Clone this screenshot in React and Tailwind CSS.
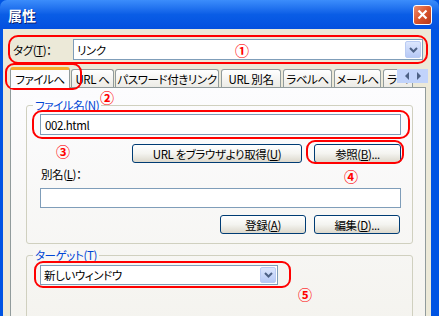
import React from "react";

const Chevron = () => (
  <svg width="9" height="6" viewBox="0 0 9 6">
    <path d="M1 1 L4.5 4.5 L8 1" fill="none" stroke="#4d6185" strokeWidth="2" />
  </svg>
);

function DropButton() {
  return (
    <div className="w-[16px] h-full flex items-center justify-center bg-gradient-to-b from-[#dce6fd] to-[#b6c9f6] border border-[#b9cbf3] rounded-[2px]">
      <Chevron />
    </div>
  );
}

function XpButton({ children, w }) {
  return (
    <div
      className={`${w} h-[19px] flex items-center justify-center rounded-[3px] border border-[#003c74] bg-gradient-to-b from-[#ffffff] via-[#f4f4f0] to-[#dcd8cc] text-black whitespace-nowrap`}
    >
      {children}
    </div>
  );
}

function Tab({ w, children, ml = "" }) {
  return (
    <div
      className={`${w} ${ml} h-[18px] mt-[2px] flex items-center justify-center rounded-t-[3px] border border-b-0 border-[#919b9c] bg-gradient-to-b from-white to-[#ecebe6] whitespace-nowrap overflow-hidden`}
    >
      {children}
    </div>
  );
}

function Mark({ className }) {
  return <div className={`absolute border-2 border-[#ff0000] ${className}`} />;
}

function Num({ className, children }) {
  return (
    <div className={`absolute text-[#ff0000] text-[14px] font-bold leading-none tracking-normal ${className}`}>
      {children}
    </div>
  );
}

export default function App() {
  const u = (c) => <span className="underline">{c}</span>;
  return (
    <div className="relative w-[439px] h-[316px] overflow-hidden bg-[#0054e3] font-['Noto_Sans_CJK_JP',sans-serif] text-[11.5px] leading-[14px] tracking-[-0.4px] text-black [font-feature-settings:'palt']">
      {/* title bar */}
      <div className="h-[29px] flex items-center justify-between pl-[8px] pr-[7px] rounded-t-[7px] bg-gradient-to-b from-[#3c8dfb] via-[#0a5de6] to-[#0450df]">
        <span className="text-white font-bold text-[14px] tracking-normal [text-shadow:1px_1px_0_#0a1e6e]">属性</span>
        <div className="w-[19px] h-[20px] rounded-[3px] border border-white bg-gradient-to-br from-[#ec8c6c] via-[#d9532b] to-[#b7381a] flex items-center justify-center">
          <svg width="11" height="11" viewBox="0 0 11 11">
            <path d="M1.5 1.5 L9.5 9.5 M9.5 1.5 L1.5 9.5" stroke="white" strokeWidth="2.2" />
          </svg>
        </div>
      </div>

      <div className="flex h-[287px]">
        <div className="w-[3px] bg-[#0054e3]" />
        <div className="w-[428px] bg-[#ece9d8] flex flex-col pl-[7px] pr-[5px]">
          {/* tag row */}
          <div className="mt-[10px] h-[21px] flex items-center">
            <div className="w-[63px] pl-[3px] whitespace-nowrap">タグ({u("T")})：</div>
            <div className="w-[350px] h-[21px] bg-white border border-[#7f9db9] flex items-center pl-[3px] pr-[1px] py-[1px]">
              <span className="flex-1">リンク</span>
              <DropButton />
            </div>
          </div>

          {/* tabs */}
          <div className="relative mt-[7px] h-[20px] flex items-end">
            <div className="relative z-10 w-[60px] h-[21px] mb-[-1px] flex items-center justify-center rounded-t-[3px] border border-b-0 border-[#919b9c] bg-[#fcfcfe] border-t-[3px] border-t-[#f6a92e] whitespace-nowrap">
              ファイルへ
            </div>
            <Tab w="w-[43px]" ml="ml-[1px]">URL へ</Tab>
            <Tab w="w-[104px]" ml="ml-[1px]">パスワード付きリンク</Tab>
            <Tab w="w-[60px]" ml="ml-[2px]">URL 別名</Tab>
            <Tab w="w-[49px]" ml="ml-[2px]">ラベルへ</Tab>
            <Tab w="w-[47px]" ml="ml-[2px]">メールへ</Tab>
            <Tab w="w-[30px]" ml="ml-[2px]">
              <span className="w-full pl-[3px]">ラベ</span>
            </Tab>
            <div className="absolute right-[-2px] top-[2px] w-[31px] h-[14px] bg-[#c1d3fb] flex items-center justify-center gap-[6px]">
              <svg width="5" height="8" viewBox="0 0 5 8"><path d="M4 0 L0 4 L4 8 Z" fill="#4d6185" /></svg>
              <svg width="5" height="8" viewBox="0 0 5 8"><path d="M1 0 L5 4 L1 8 Z" fill="#4d6185" /></svg>
            </div>
          </div>

          {/* panel */}
          <div className="flex-1 w-[416px] border border-[#919b9c] border-b-0 bg-gradient-to-b from-[#fcfcfe] to-[#f4f3ee] pl-[15px] pt-[17px]">
            {/* group 1 */}
            <div className="relative w-[387px] h-[139px] border border-[#d0d0bf] rounded-[3px] pl-[13px] pt-[8px]">
              <div className="absolute left-[6px] top-[-8px] px-[2px] bg-[#fcfcfe] text-[#0046d5] whitespace-nowrap">
                ファイル名({u("N")})
              </div>
              <div className="w-[361px] h-[21px] bg-white border border-[#7f9db9] flex items-center pl-[4px]">
                002.html
              </div>
              <div className="w-[361px] mt-[9px] flex justify-end gap-[12px]">
                <XpButton w="w-[170px]">URL をブラウザより取得({u("U")})</XpButton>
                <XpButton w="w-[87px]">参照({u("B")})...</XpButton>
              </div>
              <div className="mt-[4px] h-[14px] pl-[1px]">別名({u("L")})：</div>
              <div className="w-[361px] h-[20px] mt-[7px] bg-white border border-[#7f9db9]" />
              <div className="w-[360px] mt-[7px] flex justify-end gap-[8px]">
                <XpButton w="w-[86px]">登録({u("A")})</XpButton>
                <XpButton w="w-[86px]">編集({u("D")})...</XpButton>
              </div>
            </div>

            {/* group 2 */}
            <div className="relative mt-[11px] w-[387px] h-[80px] border border-[#d0d0bf] rounded-[3px] pl-[13px] pt-[9px]">
              <div className="absolute left-[6px] top-[-8px] px-[2px] bg-[#f8f7f4] text-[#0046d5] whitespace-nowrap">
                ターゲット({u("T")})
              </div>
              <div className="w-[238px] h-[20px] bg-white border border-[#7f9db9] flex items-center pl-[3px] pr-[1px] py-[1px]">
                <span className="flex-1">新しいウィンドウ</span>
                <DropButton />
              </div>
            </div>
          </div>
        </div>
        <div className="flex-1 bg-[#0054e3]" />
      </div>

      {/* annotations */}
      <Mark className="left-[8px] top-[35px] w-[420px] h-[29px] rounded-[10px]" />
      <Mark className="left-[5px] top-[63px] w-[77px] h-[27px] rounded-[9px]" />
      <Mark className="left-[32px] top-[110px] w-[378px] h-[29px] rounded-[10px]" />
      <Mark className="left-[306px] top-[140px] w-[98px] h-[24px] rounded-[9px]" />
      <Mark className="left-[34px] top-[261px] w-[257px] h-[27px] rounded-[9px]" />
      <Num className="left-[235px] top-[43px]">①</Num>
      <Num className="left-[100px] top-[90px]">②</Num>
      <Num className="left-[56px] top-[144px]">③</Num>
      <Num className="left-[344px] top-[169px]">④</Num>
      <Num className="left-[298px] top-[287px]">⑤</Num>
    </div>
  );
}
